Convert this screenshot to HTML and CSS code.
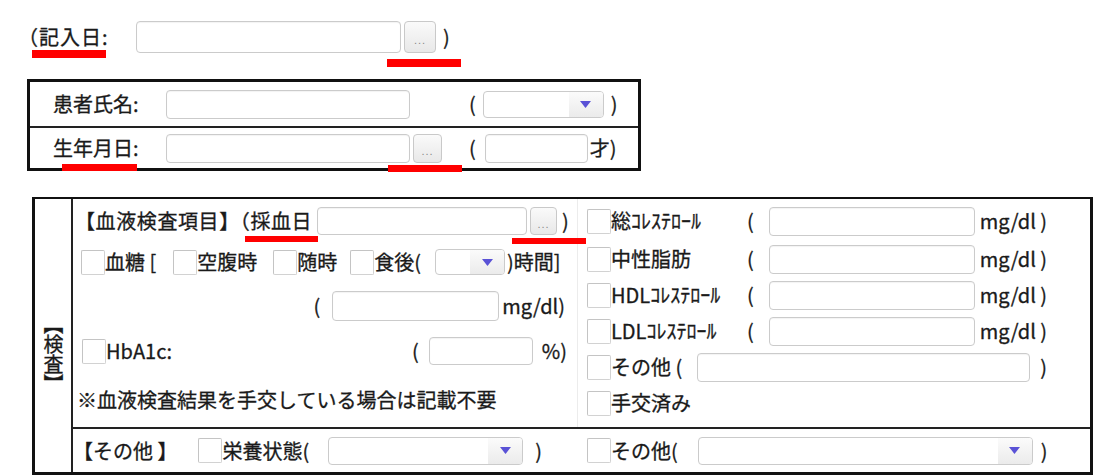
FILE: index.html
```html
<!DOCTYPE html>
<html lang="ja">
<head>
  <meta charset="UTF-8" />
  <meta name="viewport" content="width=device-width, initial-scale=1.0"/>
  <title>検査結果 入力</title>
  <link rel="stylesheet" href="styles.css">
</head>
<body>

  <div class="entry">
    <span class="entry-label">（記入日:</span>
    <input class="field w-entry" type="text">
    <button class="dots">...</button>
    <span class="entry-close">)</span>
    <span class="mark mark-1"></span>
    <span class="mark mark-2"></span>
  </div>

  <div class="patient">
    <div class="p-row">
      <span class="p-label">患者氏名:</span>
      <input class="field w-name" type="text">
      <span class="open open-sex">(</span>
      <div class="select w-sex">
        <span class="arrow"><svg width="11" height="7" viewBox="0 0 11 7"><path d="M0 0h11L5.5 7z" fill="#5a52d6"/></svg></span>
      </div>
      <span class="close-sex">)</span>
    </div>
    <div class="p-row">
      <span class="p-label">生年月日:</span>
      <input class="field w-name" type="text">
      <button class="dots dots-birth">...</button>
      <span class="open open-age">(</span>
      <input class="field w-age" type="text">
      <span class="age-unit">才)</span>
    </div>
    <span class="mark mark-3"></span>
    <span class="mark mark-4"></span>
  </div>

  <div class="exam">
    <div class="exam-side"><span>【検査】</span></div>

    <div class="exam-main">
      <div class="blood">
        <div class="blood-left">
          <div class="row r-head">
            <span class="head-label">【血液検査項目】（採血日</span>
            <input class="field w-date" type="text">
            <button class="dots dots-date">...</button>
            <span class="head-close">)</span>
            <span class="mark mark-5"></span>
            <span class="mark mark-6"></span>
          </div>
          <div class="row r-sugar">
            <span class="cb"></span><span>血糖 [</span>
            <span class="cb cb-fast"></span><span>空腹時</span>
            <span class="cb cb-any"></span><span>随時</span>
            <span class="cb cb-meal"></span><span>食後(</span>
            <div class="select w-hour">
              <span class="arrow"><svg width="11" height="7" viewBox="0 0 11 7"><path d="M0 0h11L5.5 7z" fill="#5a52d6"/></svg></span>
            </div>
            <span class="hour-close">)時間]</span>
          </div>
          <div class="row r-value">
            <span>(</span>
            <input class="field w-sugar" type="text">
            <span class="unit">mg/dl)</span>
          </div>
          <div class="row r-a1c">
            <span class="cb"></span><span>HbA1c:</span>
            <span class="a1c-open">(</span>
            <input class="field w-a1c" type="text">
            <span class="a1c-unit">%)</span>
          </div>
          <div class="row r-note">※血液検査結果を手交している場合は記載不要</div>
        </div>

        <div class="blood-right">
          <div class="row mg-row first">
            <span class="cb"></span><span class="mg-label">総ｺﾚｽﾃﾛｰﾙ</span>
            <span class="mg-open">(</span>
            <input class="field w-mg" type="text">
            <span class="mg-unit">mg/dl )</span>
          </div>
          <div class="row mg-row">
            <span class="cb"></span><span class="mg-label">中性脂肪</span>
            <span class="mg-open">(</span>
            <input class="field w-mg" type="text">
            <span class="mg-unit">mg/dl )</span>
          </div>
          <div class="row mg-row">
            <span class="cb"></span><span class="mg-label">HDLｺﾚｽﾃﾛｰﾙ</span>
            <span class="mg-open">(</span>
            <input class="field w-mg" type="text">
            <span class="mg-unit">mg/dl )</span>
          </div>
          <div class="row mg-row">
            <span class="cb"></span><span class="mg-label">LDLｺﾚｽﾃﾛｰﾙ</span>
            <span class="mg-open">(</span>
            <input class="field w-mg" type="text">
            <span class="mg-unit">mg/dl )</span>
          </div>
          <div class="row mg-row">
            <span class="cb"></span><span>その他 (</span>
            <input class="field w-etc" type="text">
            <span class="etc-close">)</span>
          </div>
          <div class="row mg-row">
            <span class="cb"></span><span>手交済み</span>
          </div>
        </div>
      </div>

      <div class="other">
        <div class="other-left">
          <span>【その他 】</span>
          <span class="cb cb-food"></span><span>栄養状態(</span>
          <div class="select w-food">
            <span class="arrow"><svg width="11" height="7" viewBox="0 0 11 7"><path d="M0 0h11L5.5 7z" fill="#5a52d6"/></svg></span>
          </div>
          <span class="food-close">)</span>
        </div>
        <div class="other-right">
          <span class="cb"></span><span>その他(</span>
          <div class="select w-other">
            <span class="arrow"><svg width="11" height="7" viewBox="0 0 11 7"><path d="M0 0h11L5.5 7z" fill="#5a52d6"/></svg></span>
          </div>
          <span class="other-close">)</span>
        </div>
      </div>
    </div>
  </div>

</body>
</html>
```

FILE: styles.css
```css
body {
  margin: 0;
  font-family: 'Noto Sans CJK JP', sans-serif;
  font-size: 20px;
  line-height: 1.2;
  color: #1a1a1a;
  background-color: #ffffff;
  -webkit-text-stroke: 0.3px #1a1a1a;
}

/* shared controls */
.field {
  box-sizing: border-box;
  margin: 0;
  padding: 0 4px;
  border: 1px solid #cbcbcb;
  border-radius: 4px;
  background-color: #fff;
  box-shadow: inset 0 1px 1px rgba(0, 0, 0, 0.05);
  font: inherit;
}

.dots {
  box-sizing: border-box;
  margin: 0;
  padding: 6px 0 0;
  border: 1px solid #c9c9c9;
  border-radius: 4px;
  background: linear-gradient(#fafafa, #e8e8e8);
  color: #888;
  -webkit-text-stroke: 0;
  font-family: 'Liberation Sans', sans-serif;
  font-size: 11px;
  letter-spacing: 1px;
}

.select {
  box-sizing: border-box;
  display: flex;
  justify-content: flex-end;
  border: 1px solid #cbcbcb;
  border-radius: 4px;
  background-color: #fff;
}

.select .arrow {
  width: 34px;
  display: flex;
  align-items: center;
  justify-content: center;
  border-radius: 0 3px 3px 0;
  background: linear-gradient(#fbfbfb, #ebebeb);
}

.cb {
  box-sizing: border-box;
  width: 24px;
  height: 25px;
  border: 1px solid #d2d2d2;
  border-top-color: #c4c4c4;
  border-left-color: #c4c4c4;
  border-radius: 2px;
  background-color: #fff;
  flex-shrink: 0;
}

.mark {
  position: absolute;
  height: 7px;
  width: 74px;
  background-color: #ff0000;
}

/* 記入日 */
.entry {
  position: relative;
  display: flex;
  align-items: center;
  height: 32px;
  padding: 21px 0 0 18px;
}

.entry-label {
  width: 118px;
  letter-spacing: 1px;
}

.w-entry {
  width: 265px;
  height: 32px;
}

.entry .dots {
  width: 32px;
  height: 32px;
  margin-left: 3px;
}

.entry-close {
  margin-left: 7px;
}

.mark-1 { left: 32px; top: 50px; height: 8px; }
.mark-2 { left: 387px; top: 59px; height: 8px; }

/* 患者 */
.patient {
  position: relative;
  box-sizing: border-box;
  width: 614px;
  margin: 26px 0 0 27px;
  border: 3px solid #111;
}

.p-row {
  display: flex;
  align-items: center;
  height: 44px;
  padding-left: 23px;
}

.p-row + .p-row {
  height: 40px;
  border-top: 2px solid #222;
}

.p-label {
  width: 113px;
}

.w-name {
  width: 244px;
  height: 29px;
}

.open-sex { margin: 0 7px 0 59px; }
.close-sex { margin-left: 7px; }

.w-sex {
  width: 121px;
  height: 27px;
}

.dots-birth {
  width: 29px;
  height: 29px;
  margin-left: 3px;
}

.open-age { margin: 0 9px 0 27px; }

.w-age {
  width: 103px;
  height: 29px;
}

.age-unit { margin-left: 2px; }

.mark-3 { left: 32px; top: 82px; width: 75px; }
.mark-4 { left: 358px; top: 83px; }

/* 検査 */
.exam {
  box-sizing: border-box;
  display: flex;
  width: 1061px;
  margin: 26px 0 0 32px;
  border: 3px solid #111;
  border-top-width: 2px;
}

.exam-side {
  width: 36px;
  display: flex;
  align-items: center;
  justify-content: center;
  padding-top: 36px;
  border-right: 2px solid #222;
}

.exam-side span {
  writing-mode: vertical-rl;
  line-height: 1;
}

.exam-main {
  flex: 1;
}

.blood {
  display: flex;
  height: 228px;
  border-bottom: 2px solid #222;
}

.blood-left {
  width: 504px;
  padding-top: 2px;
  display: flex;
  flex-direction: column;
}

.blood-right {
  flex: 1;
  padding: 2px 0 0 9px;
  border-left: 1px solid #ececec;
}

.row {
  display: flex;
  align-items: center;
}

.r-head {
  position: relative;
  height: 40px;
  padding-left: 2px;
}

.head-label {
  width: 242px;
  letter-spacing: 0.6px;
}

.w-date {
  width: 210px;
  height: 28px;
}

.dots-date {
  width: 27px;
  height: 28px;
  margin-left: 3px;
}

.head-close { margin-left: 5px; }

.mark-5 { left: 172px; top: 35px; width: 73px; height: 6px; }
.mark-6 { left: 439px; top: 37px; height: 6px; }

.r-sugar {
  height: 42px;
  padding-left: 8px;
}

.cb-fast { margin-left: 17px; }
.cb-any { margin-left: 16px; }
.cb-meal { margin-left: 13px; }

.w-hour {
  width: 70px;
  height: 26px;
  margin-left: 14px;
}

.hour-close { margin-left: 2px; }

.r-value {
  height: 46px;
  justify-content: flex-end;
  padding-right: 12px;
}

.w-sugar {
  width: 167px;
  height: 30px;
  margin-left: 12px;
}

.r-value .unit { margin-left: 3px; }

.r-a1c {
  height: 44px;
  padding: 0 10px 0 9px;
}

.a1c-open { margin-left: auto; }

.w-a1c {
  width: 104px;
  height: 28px;
  margin-left: 10px;
}

.a1c-unit { margin-left: 9px; }

.r-note {
  flex: 1;
  padding-left: 4px;
}

.mg-row {
  height: 36px;
}

.mg-row.first {
  height: 40px;
}

.mg-label {
  width: 136px;
}

.mg-open { margin-right: 15px; }

.w-mg {
  width: 206px;
  height: 29px;
}

.mg-unit { margin-left: 5px; }

.w-etc {
  width: 333px;
  height: 29px;
  margin-left: 15px;
}

.etc-close { margin-left: 10px; }

.other {
  display: flex;
  height: 43px;
}

.other-left {
  width: 504px;
  display: flex;
  align-items: center;
}

.cb-food { margin-left: 21px; }

.w-food {
  width: 195px;
  height: 28px;
  margin-left: 19px;
}

.food-close { margin-left: 12px; }

.other-right {
  flex: 1;
  display: flex;
  align-items: center;
  padding-left: 10px;
}

.w-other {
  width: 335px;
  height: 28px;
  margin-left: 20px;
}

.other-close { margin-left: 8px; }
```
